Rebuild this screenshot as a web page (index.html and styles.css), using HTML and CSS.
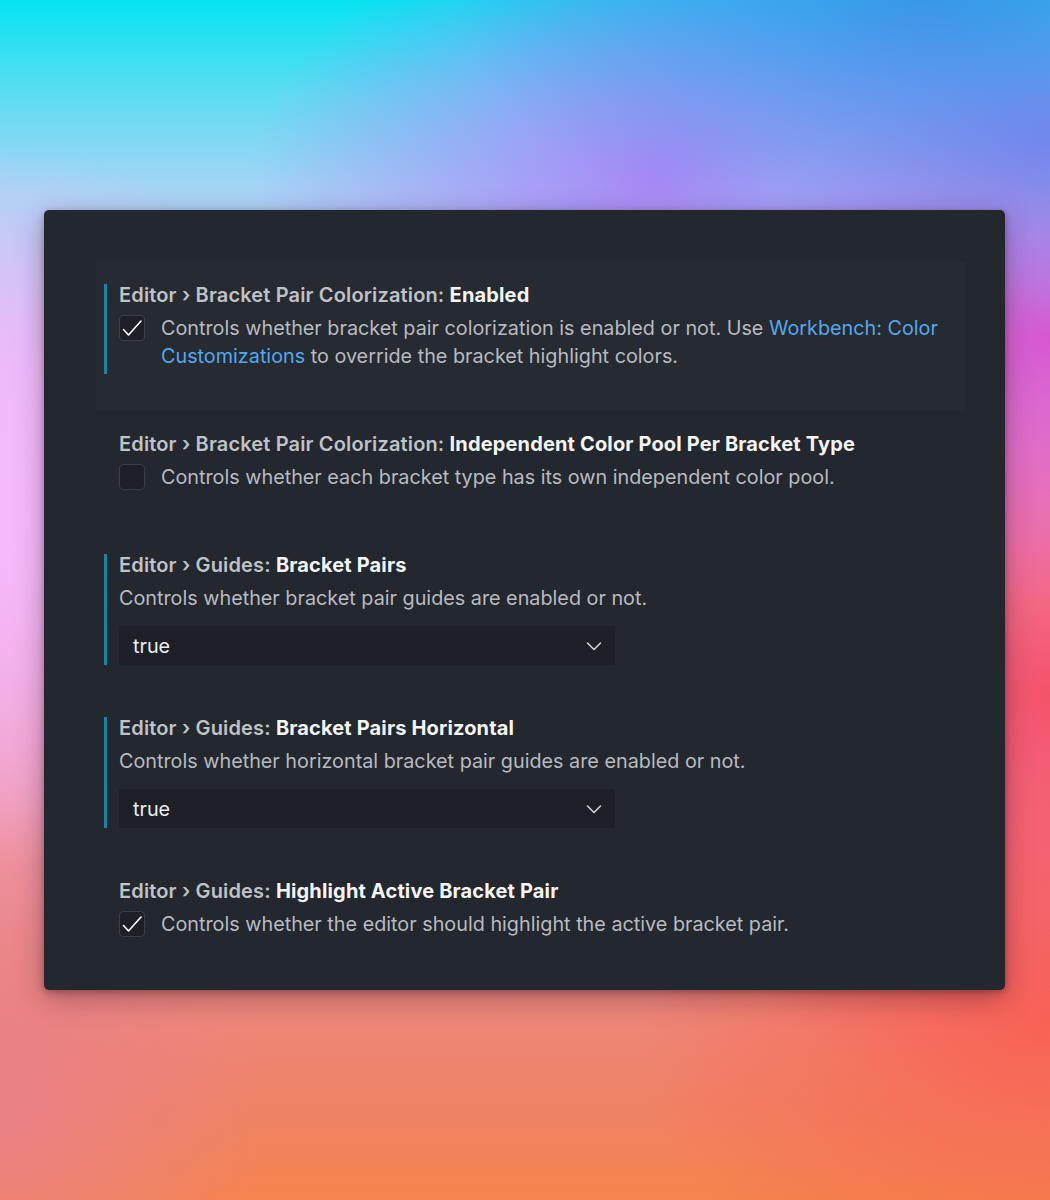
FILE: index.html
```html
<!DOCTYPE html>
<html>
<head>
<meta charset="utf-8">
<link rel="stylesheet" href="styles.css">
</head>
<body>
<div class="stage">
  <div class="panel">
    <div class="item active">
      <div class="content">
        <div class="title"><span class="cat">Editor › Bracket Pair Colorization: </span><span class="key">Enabled</span></div>
        <div class="bool">
          <span class="check on"><svg viewBox="0 0 26 26" width="26" height="26"><path d="M4.5 14.5 L9.5 20 L22 6" fill="none" stroke="#ffffff" stroke-width="1.6" stroke-linecap="round" stroke-linejoin="round"/></svg></span>
          <p class="desc">Controls whether bracket pair colorization is enabled or not. Use <span class="link">Workbench: Color Customizations</span> to override the bracket highlight colors.</p>
        </div>
      </div>
    </div>
    <div class="item">
      <div class="content plain">
        <div class="title"><span class="cat">Editor › Bracket Pair Colorization: </span><span class="key">Independent Color Pool Per Bracket Type</span></div>
        <div class="bool">
          <span class="check"></span>
          <p class="desc">Controls whether each bracket type has its own independent color pool.</p>
        </div>
      </div>
    </div>
    <div class="item sel-item">
      <div class="content">
        <div class="title"><span class="cat">Editor › Guides: </span><span class="key">Bracket Pairs</span></div>
        <p class="desc">Controls whether bracket pair guides are enabled or not.</p>
        <div class="select"><span>true</span><svg viewBox="0 0 18 18" width="18" height="18"><path d="M2.5 6 L9 12.5 L15.5 6" fill="none" stroke="#d6d8dc" stroke-width="1.5" stroke-linecap="round" stroke-linejoin="round"/></svg></div>
      </div>
    </div>
    <div class="item sel-item">
      <div class="content">
        <div class="title"><span class="cat">Editor › Guides: </span><span class="key">Bracket Pairs Horizontal</span></div>
        <p class="desc">Controls whether horizontal bracket pair guides are enabled or not.</p>
        <div class="select"><span>true</span><svg viewBox="0 0 18 18" width="18" height="18"><path d="M2.5 6 L9 12.5 L15.5 6" fill="none" stroke="#d6d8dc" stroke-width="1.5" stroke-linecap="round" stroke-linejoin="round"/></svg></div>
      </div>
    </div>
    <div class="item">
      <div class="content plain">
        <div class="title"><span class="cat">Editor › Guides: </span><span class="key">Highlight Active Bracket Pair</span></div>
        <div class="bool">
          <span class="check on"><svg viewBox="0 0 26 26" width="26" height="26"><path d="M4.5 14.5 L9.5 20 L22 6" fill="none" stroke="#ffffff" stroke-width="1.6" stroke-linecap="round" stroke-linejoin="round"/></svg></span>
          <p class="desc">Controls whether the editor should highlight the active bracket pair.</p>
        </div>
      </div>
    </div>
  </div>
</div>
</body>
</html>
```
FILE: styles.css
```css
* { box-sizing: border-box; }
html, body { margin: 0; padding: 0; }
body {
  width: 1050px;
  height: 1200px;
  overflow: hidden;
  font-family: Inter, "Noto Sans", "Liberation Sans", sans-serif;
}
.stage {
  width: 1050px;
  height: 1200px;
  padding: 210px 45px 0 44px;
  background:
    radial-gradient(ellipse 45% 20% at 88% 0%, rgba(70,128,232,0.75), rgba(70,128,232,0) 100%),
    radial-gradient(ellipse 38% 22% at 62% 15%, rgba(168,132,246,0.95), rgba(168,132,246,0) 100%),
    radial-gradient(ellipse 28% 16% at 100% 12%, rgba(128,132,236,0.9), rgba(128,132,236,0) 100%),
    radial-gradient(ellipse 30% 22% at 100% 28%, rgba(214,82,208,0.95), rgba(214,82,208,0) 100%),
    radial-gradient(ellipse 40% 35% at 100% 58%, rgba(244,78,100,0.95), rgba(244,78,100,0) 100%),
    radial-gradient(ellipse 40% 25% at 100% 85%, rgba(250,100,78,0.9), rgba(250,100,78,0) 100%),
    radial-gradient(ellipse 30% 30% at 0% 42%, rgba(246,186,252,1), rgba(246,186,252,0) 100%),
    radial-gradient(ellipse 25% 25% at 0% 92%, rgba(232,128,138,0.9), rgba(232,128,138,0) 100%),
    linear-gradient(180deg, #05e4f0 0%, #5fdcf2 8%, #a8d4f5 16%, #dcbaf8 30%, #eeb0ee 45%, #f0a0c4 62%, #ec8a86 80%, #ef8266 92%, #f4844f 100%);
}
.panel {
  width: 961px;
  height: 780px;
  background: #23272e;
  border-radius: 5px;
  padding: 52px 40px 0 52px;
  box-shadow: 0 8px 28px rgba(40,10,30,0.35), 0 2px 6px rgba(0,0,0,0.25);
  display: flex;
  flex-direction: column;
}
.item {
  padding: 22px 0 37px 8px;
}
.item.active {
  background: #262a31;
}
.item.sel-item {
  padding-bottom: 30px;
}
.content {
  border-left: 3px solid #1b84a6;
  padding-left: 12px;
}
.content.plain {
  border-left-color: transparent;
}
.title {
  font-size: 20px;
  line-height: 22px;
  font-weight: 600;
  letter-spacing: 0.15px;
  white-space: nowrap;
}
.cat { color: #bfc2c7; }
.key { color: #f4f5f7; font-weight: 700; }
.bool {
  display: flex;
  align-items: flex-start;
  gap: 16px;
  margin-top: 8px;
  padding-bottom: 4px;
}
.check {
  flex: none;
  width: 26px;
  height: 26px;
  margin-top: 1px;
  border: 1px solid #3b3f47;
  border-radius: 4px;
  background: #1d2127;
  display: flex;
  align-items: center;
  justify-content: center;
}
.check svg { display: block; margin: -1px; }
.desc {
  margin: 0;
  font-size: 19.8px;
  line-height: 28px;
  color: #b8bbc0;
}
.content > .desc { margin-top: 8px; }
.link { color: #55a8ef; }
.select {
  margin-top: 14px;
  width: 496px;
  height: 39px;
  background: #1d2127;
  display: flex;
  align-items: center;
  justify-content: space-between;
  padding: 0 12px 0 14px;
  font-size: 19.8px;
  color: #eceef0;
}
.select svg { display: block; }
```
